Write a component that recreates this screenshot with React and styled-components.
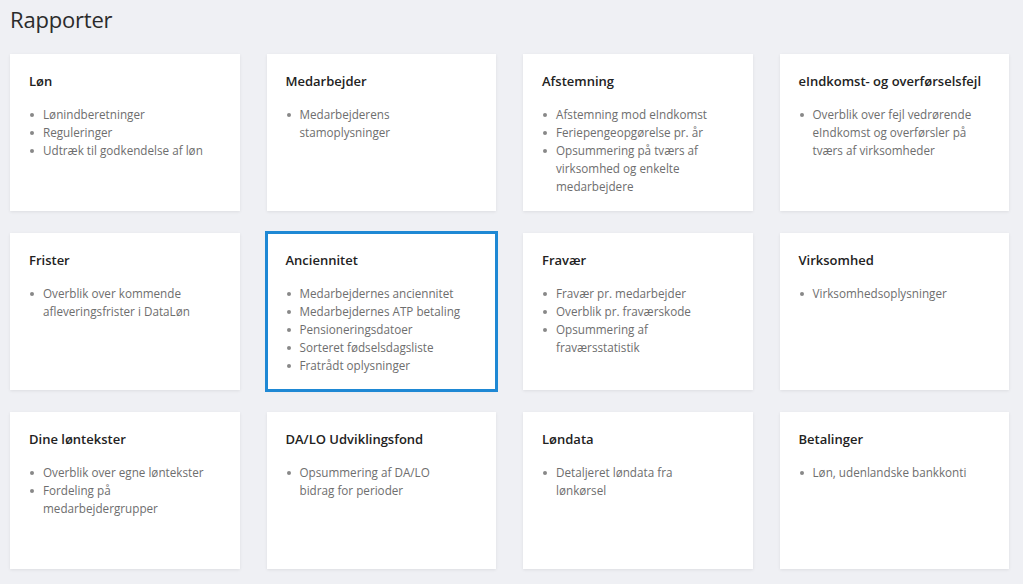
import React from "react";
import styled, { createGlobalStyle } from "styled-components";

const Global = createGlobalStyle`
  html, body { margin: 0; padding: 0; background: #eff0f4; }
  body { font-family: "Open Sans", "Noto Sans", sans-serif; }
`;

const Page = styled.div`
  padding: 4px 14px 0 10px;
  min-height: 584px;
  box-sizing: border-box;
`;

const Heading = styled.h1`
  margin: 0 0 19px 0;
  font-size: 22px;
  font-weight: 400;
  color: #2b2b2b;
  line-height: 31px;
  letter-spacing: -0.2px;
`;

const Grid = styled.div`
  display: grid;
  grid-template-columns: repeat(4, minmax(0, 1fr));
  column-gap: 27px;
  row-gap: 22px;
`;

const Card = styled.div`
  background: #fff;
  height: 157px;
  box-sizing: border-box;
  padding: 18px 32px 18px 19px;
  box-shadow: 0 1px 3px rgba(0, 0, 0, 0.08);
  outline: ${(p) => (p.$active ? "3px solid #1e88d4" : "none")};
  outline-offset: -1px;
`;

const Title = styled.div`
  font-size: 13px;
  font-weight: 600;
  color: #222;
  line-height: 18px;
  margin-bottom: 15px;
  white-space: nowrap;
`;

const List = styled.ul`
  list-style: none;
  margin: 0;
  padding: 0;
`;

const Item = styled.li`
  position: relative;
  padding-left: 14px;
  font-size: 11.7px;
  line-height: 18px;
  color: #6e6e6e;
  &::before {
    content: "";
    position: absolute;
    left: 1px;
    top: 8px;
    width: 4px;
    height: 4px;
    border-radius: 50%;
    background: #888;
  }
`;

const cards = [
  { t: "Løn", items: ["Lønindberetninger", "Reguleringer", "Udtræk til godkendelse af løn"] },
  { t: "Medarbejder", items: ["Medarbejderens stamoplysninger"] },
  { t: "Afstemning", items: ["Afstemning mod eIndkomst", "Feriepengeopgørelse pr. år", "Opsummering på tværs af virksomhed og enkelte medarbejdere"] },
  { t: "eIndkomst- og overførselsfejl", items: ["Overblik over fejl vedrørende eIndkomst og overførsler på tværs af virksomheder"] },
  { t: "Frister", items: ["Overblik over kommende afleveringsfrister i DataLøn"] },
  { t: "Anciennitet", active: true, items: ["Medarbejdernes anciennitet", "Medarbejdernes ATP betaling", "Pensioneringsdatoer", "Sorteret fødselsdagsliste", "Fratrådt oplysninger"] },
  { t: "Fravær", items: ["Fravær pr. medarbejder", "Overblik pr. fraværskode", "Opsummering af fraværsstatistik"] },
  { t: "Virksomhed", items: ["Virksomhedsoplysninger"] },
  { t: "Dine løntekster", items: ["Overblik over egne løntekster", "Fordeling på medarbejdergrupper"] },
  { t: "DA/LO Udviklingsfond", items: ["Opsummering af DA/LO bidrag for perioder"] },
  { t: "Løndata", items: ["Detaljeret løndata fra lønkørsel"] },
  { t: "Betalinger", items: ["Løn, udenlandske bankkonti"] },
];

export default function App() {
  return (
    <>
      <Global />
      <Page>
        <Heading>Rapporter</Heading>
        <Grid>
          {cards.map((c) => (
            <Card key={c.t} $active={c.active}>
              <Title>{c.t}</Title>
              <List>
                {c.items.map((i) => (
                  <Item key={i}>{i}</Item>
                ))}
              </List>
            </Card>
          ))}
        </Grid>
      </Page>
    </>
  );
}
